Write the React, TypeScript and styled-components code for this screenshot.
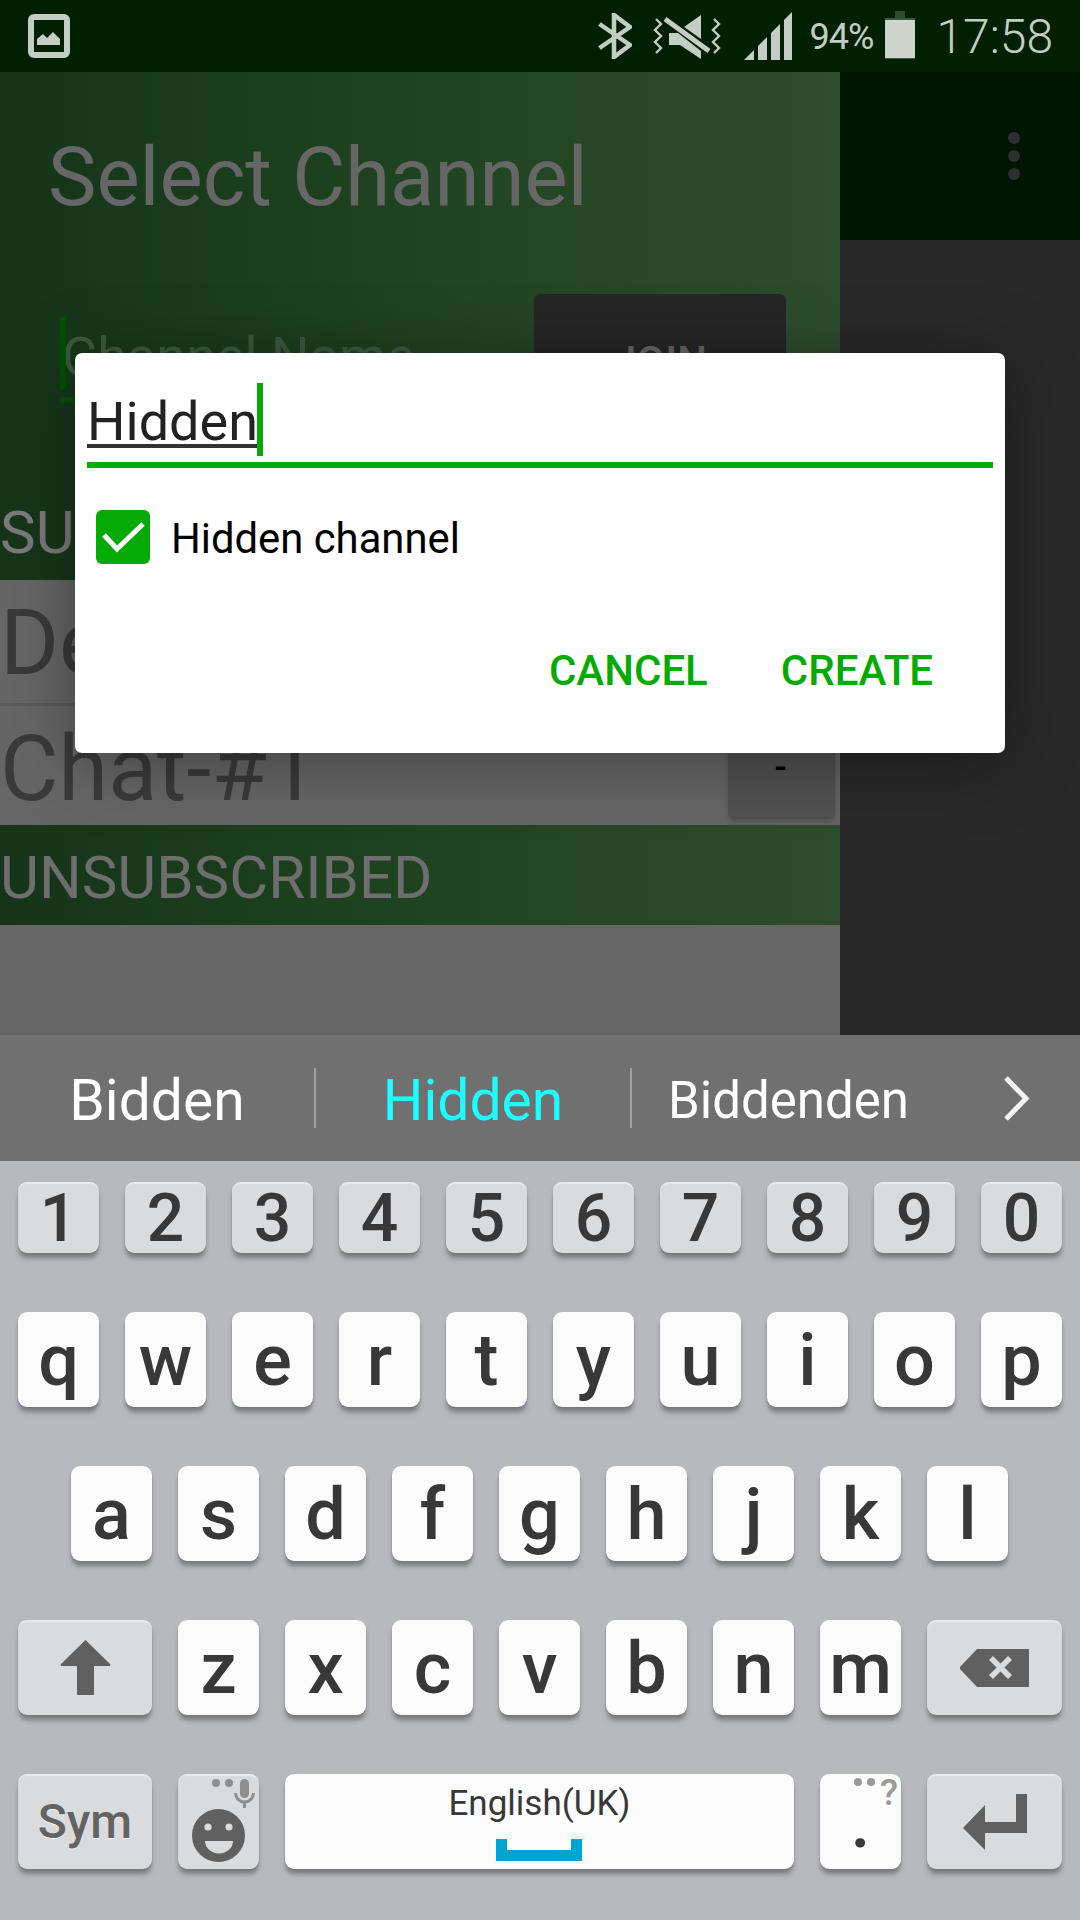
import styled, { createGlobalStyle } from "styled-components";

const GREEN = "#05aa05";
const BAR_GRADIENT =
  "linear-gradient(to right, #15341a 0%, #1d411e 40%, #294a2a 85%, #2d4d2e 100%)";

const numberKeys = ["1", "2", "3", "4", "5", "6", "7", "8", "9", "0"];
const topKeys = ["q", "w", "e", "r", "t", "y", "u", "i", "o", "p"];
const homeKeys = ["a", "s", "d", "f", "g", "h", "j", "k", "l"];
const bottomKeys = ["z", "x", "c", "v", "b", "n", "m"];

const App = () => (
  <Page>
    <GlobalStyle />
    <StatusBar>
      <PhotoIcon />
      <StatusRight>
        <BluetoothIcon />
        <VibrateIcon />
        <SignalIcon />
        <BatteryText>94%</BatteryText>
        <BatteryIcon />
        <Clock>17:58</Clock>
      </StatusRight>
    </StatusBar>

    <Main>
      <LeftPane>
        <Toolbar>
          <Title>Select Channel</Title>
        </Toolbar>
        <JoinForm>
          <ChannelField>
            <FieldCaret />
            <Placeholder>Channel Name</Placeholder>
          </ChannelField>
          <JoinButton>JOIN</JoinButton>
        </JoinForm>
        <SectionHeader $color="#7b7b7b">SUBSCRIBED</SectionHeader>
        <ChannelRow $height={126}>
          <ChannelName>Default</ChannelName>
          <RemoveButton>-</RemoveButton>
        </ChannelRow>
        <ChannelRow $height={119} $last>
          <ChannelName>Chat-#1</ChannelName>
          <RemoveButton>-</RemoveButton>
        </ChannelRow>
        <SectionHeader $color="#6e6e6e">UNSUBSCRIBED</SectionHeader>
        <EmptyList />
      </LeftPane>
      <RightPane>
        <MenuArea>
          <MenuDots>
            <MenuDot />
            <MenuDot />
            <MenuDot />
          </MenuDots>
        </MenuArea>
      </RightPane>

      <Dialog>
        <EditRow>
          <TypedWord>Hidden</TypedWord>
          <EditCaret />
        </EditRow>
        <CheckRow>
          <CheckBox>
            <svg width="54" height="54" viewBox="0 0 54 54">
              <path d="M8 25 L21 39 L47 14" fill="none" stroke="#fff" strokeWidth="5" />
            </svg>
          </CheckBox>
          <CheckLabel>Hidden channel</CheckLabel>
        </CheckRow>
        <DialogActions>
          <DialogAction>CANCEL</DialogAction>
          <DialogAction>CREATE</DialogAction>
        </DialogActions>
      </Dialog>
    </Main>

    <Suggestions>
      <Suggestion $width={314}>Bidden</Suggestion>
      <SuggestionDivider />
      <Suggestion $width={314} $active>
        Hidden
      </Suggestion>
      <SuggestionDivider />
      <Suggestion $width={313} $small>
        Biddenden
      </Suggestion>
      <MoreSuggestions>
        <svg width="27" height="45" viewBox="0 0 27 45">
          <path d="M3 2 L23 22.5 L3 43" fill="none" stroke="#f2f2f2" strokeWidth="5" />
        </svg>
      </MoreSuggestions>
    </Suggestions>

    <Keyboard>
      <KeyRow>
        {numberKeys.map((k) => (
          <NumberKey key={k}>{k}</NumberKey>
        ))}
      </KeyRow>
      <KeyRow>
        {topKeys.map((k) => (
          <LetterKey key={k}>{k}</LetterKey>
        ))}
      </KeyRow>
      <KeyRow $indent={71}>
        {homeKeys.map((k) => (
          <LetterKey key={k}>{k}</LetterKey>
        ))}
      </KeyRow>
      <KeyRow>
        <ShiftKey>
          <svg width="51" height="55" viewBox="0 0 51 55">
            <path
              d="M25.5 0 L50 24 Q51 26 49 26 L34 26 L34 55 L17 55 L17 26 L2 26 Q0 26 1 24 Z"
              fill="#606060"
            />
          </svg>
        </ShiftKey>
        {bottomKeys.map((k) => (
          <LetterKey key={k}>{k}</LetterKey>
        ))}
        <WideKey>
          <svg width="69" height="38" viewBox="0 0 69 38">
            <path d="M17 0 L69 0 L69 38 L17 38 L0 20 Q-1 19 0 18 Z" fill="#606060" />
            <path d="M31 9 L50 28 M50 9 L31 28" stroke="#dadbdd" strokeWidth="5.5" />
          </svg>
        </WideKey>
      </KeyRow>
      <KeyRow>
        <SymKey>Sym</SymKey>
        <EmojiKey>
          <svg width="81" height="95" viewBox="0 0 81 95">
            <circle cx="38" cy="9" r="4" fill="#8e8e8e" />
            <circle cx="51" cy="9" r="4" fill="#8e8e8e" />
            <rect x="62" y="5" width="9" height="19" rx="4.5" fill="#8e8e8e" />
            <path d="M57.5 19 A9 9 0 0 0 75.5 19" fill="none" stroke="#8e8e8e" strokeWidth="3" />
            <rect x="65" y="28" width="3" height="6" fill="#8e8e8e" />
            <circle cx="40.5" cy="61.5" r="26.5" fill="#606060" />
            <circle cx="30" cy="53" r="3.6" fill="#dadbdd" />
            <circle cx="51" cy="53" r="3.6" fill="#dadbdd" />
            <path d="M27 67 L55 67 A14 12.5 0 0 1 27 67 Z" fill="#dadbdd" />
          </svg>
        </EmojiKey>
        <SpaceKey>
          <SpaceLabel>English(UK)</SpaceLabel>
          <svg width="86" height="22" viewBox="0 0 86 22">
            <path d="M5.5 0 L5.5 16.5 L80.5 16.5 L80.5 0" fill="none" stroke="#00a4d3" strokeWidth="11" />
          </svg>
        </SpaceKey>
        <PeriodKey>
          .
          <HintDots>
            <svg width="26" height="10" viewBox="0 0 26 10">
              <circle cx="4" cy="5" r="4" fill="#999" />
              <circle cx="17" cy="5" r="4" fill="#999" />
            </svg>
          </HintDots>
          <HintMark>?</HintMark>
        </PeriodKey>
        <WideKey>
          <svg width="64" height="56" viewBox="0 0 64 56">
            <path d="M53 0 L64 0 L64 39 L22 39 L22 56 L0 34 L22 11 L22 28 L53 28 Z" fill="#606060" />
          </svg>
        </WideKey>
      </KeyRow>
    </Keyboard>
  </Page>
);

export default App;

const PhotoIcon = () => (
  <svg width="42" height="44" viewBox="0 0 42 44">
    <rect x="3" y="3" width="36" height="38" rx="3" fill="none" stroke="#c3cdc3" strokeWidth="6" />
    <path d="M9 31 L9 25 L15 20 L19 24 L25 18 L32 25 L32 31 Z" fill="#c3cdc3" />
  </svg>
);

const BluetoothIcon = () => (
  <svg width="34" height="46" viewBox="0 0 34 46">
    <path d="M1.5 11 L32 32 L16 44 L16 2 L32 14 L1.5 35" fill="none" stroke="#c3cdc3" strokeWidth="4.5" />
  </svg>
);

const VibrateIcon = () => (
  <svg width="70" height="46" viewBox="0 0 70 46">
    <path d="M4 6 L9 11 L3 17 L9 23 L3 29 L9 35 L4 40" fill="none" stroke="#c3cdc3" strokeWidth="2.4" />
    <path d="M62 6 L67 11 L61 17 L67 23 L61 29 L67 35 L62 40" fill="none" stroke="#c3cdc3" strokeWidth="2.4" />
    <path d="M32 14 L49 2 L49 26 Z" fill="#c3cdc3" />
    <path d="M17 20 L26 20 L49 38 L49 46 L28 32 L17 32 Z" fill="#c3cdc3" />
    <path d="M13 6 L57 38" stroke="#c3cdc3" strokeWidth="5" />
  </svg>
);

const SignalIcon = () => (
  <svg width="48" height="48" viewBox="0 0 48 48">
    <path d="M0 48 L10 38 L10 48 Z" fill="#c3cdc3" />
    <path d="M14 34 L23 25 L23 48 L14 48 Z" fill="#c3cdc3" />
    <path d="M27 21 L36 12 L36 48 L27 48 Z" fill="#c3cdc3" />
    <path d="M40 8 L48 0 L48 48 L40 48 Z" fill="#c3cdc3" />
  </svg>
);

const BatteryIcon = () => (
  <svg width="30" height="48" viewBox="0 0 30 48">
    <rect x="10" y="0" width="10" height="7" fill="#2f4a2f" />
    <rect x="0" y="7" width="30" height="41" fill="#3c573c" />
    <rect x="0" y="9" width="30" height="38" fill="#cbd5cb" />
  </svg>
);

const GlobalStyle = createGlobalStyle`
  html, body {
    margin: 0;
    padding: 0;
    background: #000;
  }
  * {
    box-sizing: border-box;
  }
`;

const Page = styled.div`
  width: 1080px;
  height: 1920px;
  display: flex;
  flex-direction: column;
  overflow: hidden;
  font-family: Roboto, "Liberation Sans", sans-serif;
`;

const StatusBar = styled.div`
  height: 72px;
  flex: none;
  display: flex;
  align-items: center;
  justify-content: space-between;
  padding: 0 27px 0 28px;
  background: #012001;
`;

const StatusRight = styled.div`
  display: flex;
  align-items: center;

  & > svg:nth-child(1) {
    margin-right: 20px;
  }
  & > svg:nth-child(2) {
    margin-right: 22px;
  }
  & > svg:nth-child(5) {
    margin-left: 12px;
    margin-right: 21px;
    margin-top: -2px;
  }
`;

const BatteryText = styled.span`
  margin-left: 18px;
  margin-top: 2px;
  font-size: 36px;
  color: #c3cdc3;
  letter-spacing: -1px;
`;

const Clock = styled.span`
  font-size: 48px;
  font-weight: 300;
  color: #c3cdc3;
`;

const Main = styled.div`
  position: relative;
  height: 963px;
  flex: none;
  display: flex;
`;

const LeftPane = styled.div`
  width: 840px;
  display: flex;
  flex-direction: column;
  background: #666;
`;

const RightPane = styled.div`
  width: 240px;
  background: #292929;
`;

const MenuArea = styled.div`
  height: 168px;
  padding: 60px 60px 0 0;
  display: flex;
  justify-content: flex-end;
  background: #001500;
`;

const MenuDots = styled.div`
  display: flex;
  flex-direction: column;
  gap: 6px;
`;

const MenuDot = styled.span`
  width: 12px;
  height: 12px;
  border-radius: 50%;
  background: #2e2e33;
`;

const Toolbar = styled.div`
  height: 168px;
  flex: none;
  display: flex;
  align-items: center;
  padding: 42px 0 0 48px;
  background: ${BAR_GRADIENT};
`;

const Title = styled.h1`
  margin: 0;
  font-size: 81.5px;
  font-weight: 400;
  color: #666;
`;

const JoinForm = styled.div`
  height: 240px;
  flex: none;
  display: flex;
  justify-content: space-between;
  padding: 54px 54px 0 60px;
  background: ${BAR_GRADIENT};
`;

const ChannelField = styled.div`
  position: relative;
  height: 109px;
  padding: 31px 0 0 2px;
  font-size: 54px;
  color: #3d5a40;
`;

const FieldCaret = styled.span`
  position: absolute;
  top: 23px;
  left: 0;
  width: 6px;
  height: 73px;
  background: #035003;

  &::after {
    content: "";
    position: absolute;
    left: 0;
    top: 80px;
    width: 18px;
    height: 6px;
    background: #035003;
  }
`;

const Placeholder = styled.span`
  display: block;
  line-height: 63px;
`;

const JoinButton = styled.div`
  width: 252px;
  height: 134px;
  display: flex;
  align-items: center;
  justify-content: center;
  border-radius: 6px;
  background: #262626;
  color: #666;
  font-size: 42px;
  font-weight: 500;
`;

const SectionHeader = styled.div<{ $color: string }>`
  height: 100px;
  flex: none;
  display: flex;
  align-items: center;
  padding-top: 4px;
  font-size: 60px;
  color: ${(p) => p.$color};
  background: ${BAR_GRADIENT};
`;

const ChannelRow = styled.div<{ $height: number; $last?: boolean }>`
  height: ${(p) => p.$height}px;
  flex: none;
  display: flex;
  align-items: flex-start;
  justify-content: space-between;
  padding-right: 5px;
  border-bottom: ${(p) => (p.$last ? "none" : "3px solid #5a5a5a")};
  background: #666;
`;

const ChannelName = styled.span`
  padding-top: 5px;
  font-size: 90px;
  line-height: 118px;
  color: #3a3a3a;
`;

const RemoveButton = styled.div`
  width: 107px;
  height: 108px;
  margin-top: 5px;
  display: flex;
  align-items: center;
  justify-content: center;
  padding: 6px 2px 0 0;
  border-radius: 6px;
  background: #515151;
  box-shadow: 0 3px 5px rgba(0, 0, 0, 0.18);
  color: #000;
  font-size: 36px;
  font-weight: 500;
`;

const EmptyList = styled.div`
  flex: 1;
  background: #666;
`;

const Dialog = styled.div`
  position: absolute;
  top: 281px;
  left: 75px;
  width: 930px;
  height: 400px;
  padding: 0 12px;
  display: flex;
  flex-direction: column;
  border-radius: 7px;
  background: #fff;
  box-shadow: 0 8px 70px rgba(0, 0, 0, 0.38);
`;

const EditRow = styled.div`
  height: 115px;
  flex: none;
  display: flex;
  align-items: flex-start;
  padding-top: 30px;
  border-bottom: 6px solid ${GREEN};
`;

const TypedWord = styled.span`
  height: 65px;
  padding-top: 14px;
  border-bottom: 4px solid #333;
  font-size: 54px;
  line-height: 50px;
  color: #222;
`;

const EditCaret = styled.span`
  width: 6px;
  height: 73px;
  margin-left: -1px;
  background: ${GREEN};
`;

const CheckRow = styled.div`
  height: 54px;
  flex: none;
  margin: 42px 0 0 9px;
  display: flex;
  align-items: center;
  gap: 21px;
`;

const CheckBox = styled.span`
  width: 54px;
  height: 54px;
  border-radius: 6px;
  background: ${GREEN};
  display: block;

  & > svg {
    display: block;
  }
`;

const CheckLabel = styled.span`
  margin-top: 2px;
  font-size: 41.8px;
  color: #000;
`;

const DialogActions = styled.div`
  margin-top: 82px;
  padding-right: 60px;
  display: flex;
  justify-content: flex-end;
  gap: 73px;
`;

const DialogAction = styled.span`
  font-size: 42px;
  font-weight: 500;
  color: ${GREEN};
`;

const Suggestions = styled.div`
  height: 126px;
  flex: none;
  display: flex;
  align-items: center;
  background: #707070;
`;

const Suggestion = styled.span<{ $width: number; $active?: boolean; $small?: boolean }>`
  width: ${(p) => p.$width}px;
  padding-top: 4px;
  text-align: center;
  font-size: ${(p) => (p.$small ? 51 : 57)}px;
  color: ${(p) => (p.$active ? "#1affff" : "#fff")};
`;

const SuggestionDivider = styled.span`
  width: 2px;
  height: 60px;
  background: #a0a0a0;
`;

const MoreSuggestions = styled.span`
  margin-left: 58px;
  display: flex;
`;

const Keyboard = styled.div`
  flex: 1;
  display: flex;
  flex-direction: column;
  gap: 59px;
  padding-top: 21px;
  background: #b8b9bd;
`;

const KeyRow = styled.div<{ $indent?: number }>`
  display: flex;
  gap: 26px;
  padding-left: ${(p) => p.$indent ?? 18}px;
`;

const Key = styled.div`
  position: relative;
  width: 81px;
  height: 95px;
  display: flex;
  align-items: center;
  justify-content: center;
  border-radius: 9px;
  background: #fbfbfb;
  box-shadow: 0 1px 1px #77777c, 0 6px 5px -1px rgba(70, 70, 78, 0.55);
  color: #383838;
`;

const LetterKey = styled(Key)`
  padding-top: 2px;
  font-size: 72px;
  font-weight: 500;
`;

const GreyKey = styled(Key)`
  background: #dadbdd;
  box-shadow: inset 0 3px 1px -1px #e9eaeb, 0 1px 1px #77777c, 0 6px 5px -1px rgba(70, 70, 78, 0.55);
`;

const NumberKey = styled(GreyKey)`
  height: 71px;
  padding-top: 2px;
  font-size: 66px;
  font-weight: 500;
`;

const WideKey = styled(GreyKey)`
  width: 135px;
`;

const ShiftKey = styled(WideKey)`
  width: 134px;
`;

const SymKey = styled(ShiftKey)`
  font-size: 48px;
  font-weight: 500;
  color: #636363;
  text-shadow: 0 1px 0 #f4f4f4;
`;

const EmojiKey = styled(GreyKey)`
  & > svg {
    display: block;
  }
`;

const SpaceKey = styled(Key)`
  width: 509px;
  flex-direction: column;
  justify-content: flex-start;

  & > svg {
    display: block;
    margin-top: 10px;
    margin-left: -2px;
  }
`;

const SpaceLabel = styled.span`
  margin-top: 5px;
  font-size: 35px;
  line-height: 50px;
  color: #383838;
`;

const PeriodKey = styled(LetterKey)``;

const HintDots = styled.span`
  position: absolute;
  top: 3px;
  left: 34px;
  display: flex;
`;

const HintMark = styled.span`
  position: absolute;
  top: -1px;
  right: 3px;
  font-size: 37px;
  line-height: 40px;
  font-weight: 500;
  color: #9a9a9a;
`;
